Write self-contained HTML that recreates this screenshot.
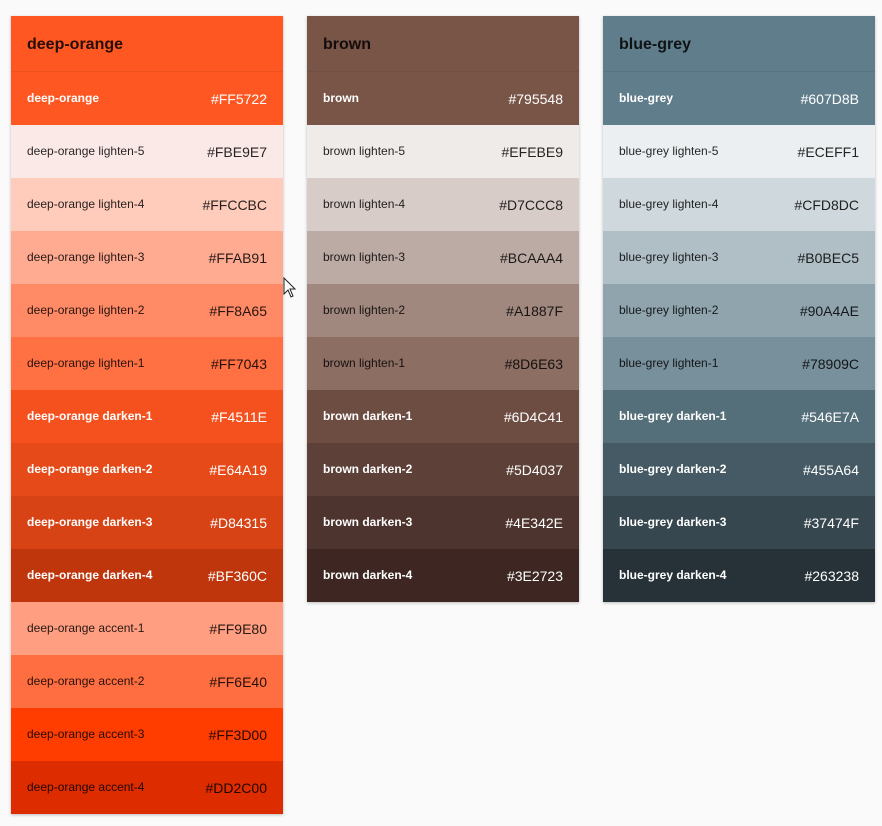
<!DOCTYPE html>
<html><head><meta charset="utf-8"><style>
body{margin:0;background:#fafafa;font-family:"Liberation Sans",Arial,sans-serif;width:882px;height:826px;overflow:hidden;position:relative}
.card{position:absolute;top:16px;width:272px;box-shadow:0 1px 3px rgba(0,0,0,.25)}
.h{height:55px;border-bottom:1px solid rgba(0,0,0,.06);padding-left:16px;line-height:58px;font-size:16px;font-weight:bold;color:rgba(0,0,0,.85)}
.r{height:53px;display:flex;justify-content:space-between;align-items:center;padding:0 16px;box-sizing:border-box;color:rgba(0,0,0,.85)}
.r span:first-child{font-size:12px;margin-top:-2px}
.r span:last-child{font-size:14px}
.w{color:#fff}.w span:first-child{font-weight:bold}
</style></head><body>
<div class="card" style="left:11px">
<div class="h" style="background:#FF5722">deep-orange</div>
<div class="r w" style="background:#FF5722"><span>deep-orange</span><span>#FF5722</span></div>
<div class="r" style="background:#FBE9E7"><span>deep-orange lighten-5</span><span>#FBE9E7</span></div>
<div class="r" style="background:#FFCCBC"><span>deep-orange lighten-4</span><span>#FFCCBC</span></div>
<div class="r" style="background:#FFAB91"><span>deep-orange lighten-3</span><span>#FFAB91</span></div>
<div class="r" style="background:#FF8A65"><span>deep-orange lighten-2</span><span>#FF8A65</span></div>
<div class="r" style="background:#FF7043"><span>deep-orange lighten-1</span><span>#FF7043</span></div>
<div class="r w" style="background:#F4511E"><span>deep-orange darken-1</span><span>#F4511E</span></div>
<div class="r w" style="background:#E64A19"><span>deep-orange darken-2</span><span>#E64A19</span></div>
<div class="r w" style="background:#D84315"><span>deep-orange darken-3</span><span>#D84315</span></div>
<div class="r w" style="background:#BF360C"><span>deep-orange darken-4</span><span>#BF360C</span></div>
<div class="r" style="background:#FF9E80"><span>deep-orange accent-1</span><span>#FF9E80</span></div>
<div class="r" style="background:#FF6E40"><span>deep-orange accent-2</span><span>#FF6E40</span></div>
<div class="r" style="background:#FF3D00"><span>deep-orange accent-3</span><span>#FF3D00</span></div>
<div class="r" style="background:#DD2C00"><span>deep-orange accent-4</span><span>#DD2C00</span></div>
</div>
<div class="card" style="left:307px">
<div class="h" style="background:#795548">brown</div>
<div class="r w" style="background:#795548"><span>brown</span><span>#795548</span></div>
<div class="r" style="background:#EFEBE9"><span>brown lighten-5</span><span>#EFEBE9</span></div>
<div class="r" style="background:#D7CCC8"><span>brown lighten-4</span><span>#D7CCC8</span></div>
<div class="r" style="background:#BCAAA4"><span>brown lighten-3</span><span>#BCAAA4</span></div>
<div class="r" style="background:#A1887F"><span>brown lighten-2</span><span>#A1887F</span></div>
<div class="r" style="background:#8D6E63"><span>brown lighten-1</span><span>#8D6E63</span></div>
<div class="r w" style="background:#6D4C41"><span>brown darken-1</span><span>#6D4C41</span></div>
<div class="r w" style="background:#5D4037"><span>brown darken-2</span><span>#5D4037</span></div>
<div class="r w" style="background:#4E342E"><span>brown darken-3</span><span>#4E342E</span></div>
<div class="r w" style="background:#3E2723"><span>brown darken-4</span><span>#3E2723</span></div>
</div>
<div class="card" style="left:603px">
<div class="h" style="background:#607D8B">blue-grey</div>
<div class="r w" style="background:#607D8B"><span>blue-grey</span><span>#607D8B</span></div>
<div class="r" style="background:#ECEFF1"><span>blue-grey lighten-5</span><span>#ECEFF1</span></div>
<div class="r" style="background:#CFD8DC"><span>blue-grey lighten-4</span><span>#CFD8DC</span></div>
<div class="r" style="background:#B0BEC5"><span>blue-grey lighten-3</span><span>#B0BEC5</span></div>
<div class="r" style="background:#90A4AE"><span>blue-grey lighten-2</span><span>#90A4AE</span></div>
<div class="r" style="background:#78909C"><span>blue-grey lighten-1</span><span>#78909C</span></div>
<div class="r w" style="background:#546E7A"><span>blue-grey darken-1</span><span>#546E7A</span></div>
<div class="r w" style="background:#455A64"><span>blue-grey darken-2</span><span>#455A64</span></div>
<div class="r w" style="background:#37474F"><span>blue-grey darken-3</span><span>#37474F</span></div>
<div class="r w" style="background:#263238"><span>blue-grey darken-4</span><span>#263238</span></div>
</div>
<svg style="position:absolute;left:283px;top:277px" width="14" height="22" viewBox="0 0 14 22"><path d="M1 1 L1 17 L5 13 L8 20 L10 19 L7 12 L12 12 Z" fill="#fff" stroke="#222" stroke-width="1"/></svg>
</body></html>
